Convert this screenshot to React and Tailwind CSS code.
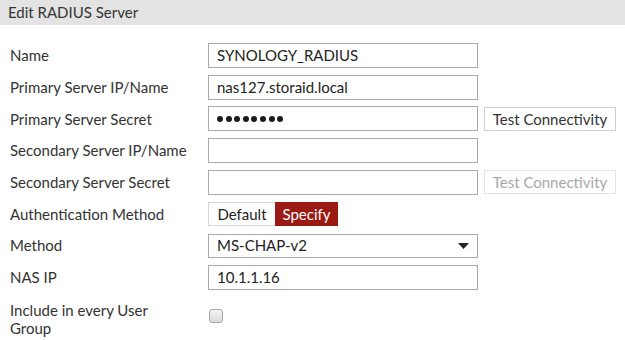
import React from "react";

const Row = ({ label, children }) => (
  <div className="flex items-center h-[25px]">
    <div className="w-[208px] shrink-0 pl-[10px] text-[15px] text-[#333]">{label}</div>
    {children}
  </div>
);

const TextBox = ({ value }) => (
  <div className="w-[270px] h-[25px] border border-[#a9a9a9] bg-white flex items-center pl-[8px] text-[15px] text-[#222]">
    {value}
  </div>
);

const TestButton = ({ disabled }) => (
  <div
    className={`ml-[6px] w-[132px] h-[24px] border flex items-center justify-center text-[15px] ${
      disabled ? "border-[#e2e2e2] text-[#a8a8a8]" : "border-[#cfcfcf] text-[#333]"
    }`}
  >
    Test Connectivity
  </div>
);

export default function App() {
  return (
    <div className="w-[625px] h-[340px] bg-white font-['Lato','Liberation_Sans',sans-serif] overflow-hidden">
      <div className="h-[25px] bg-[#e3e3e3] flex items-center pl-[8px] text-[15px] text-[#333]">
        Edit RADIUS Server
      </div>

      <div className="mt-[18px] flex flex-col gap-[6.7px]">
        <Row label="Name">
          <TextBox value="SYNOLOGY_RADIUS" />
        </Row>
        <Row label="Primary Server IP/Name">
          <TextBox value="nas127.storaid.local" />
        </Row>
        <Row label="Primary Server Secret">
          <div className="w-[270px] h-[25px] border border-[#a9a9a9] bg-white flex items-center pl-[8px] gap-[2.6px]">
            {[0, 1, 2, 3, 4, 5, 6, 7].map((i) => (
              <span key={i} className="w-[6px] h-[6px] rounded-full bg-[#1a1a1a]" />
            ))}
          </div>
          <TestButton />
        </Row>
        <Row label="Secondary Server IP/Name">
          <TextBox value="" />
        </Row>
        <Row label="Secondary Server Secret">
          <TextBox value="" />
          <TestButton disabled />
        </Row>
        <Row label="Authentication Method">
          <div className="flex h-[24px] text-[15px]">
            <div className="w-[67px] border border-r-0 border-[#d6d6d6] flex items-center justify-center text-[#222]">
              Default
            </div>
            <div className="w-[63px] bg-[#9b1a14] flex items-center justify-center text-white">
              Specify
            </div>
          </div>
        </Row>
        <Row label="Method">
          <div className="w-[270px] h-[24px] border border-[#a9a9a9] bg-white flex items-center justify-between pl-[8px] pr-[8px] text-[15px] text-[#222]">
            <span>MS-CHAP-v2</span>
            <svg width="11" height="6" viewBox="0 0 11 6">
              <path d="M0 0 L11 0 L5.5 6 Z" fill="#222" />
            </svg>
          </div>
        </Row>
        <Row label="NAS IP">
          <TextBox value="10.1.1.16" />
        </Row>
      </div>

      <div className="mt-[11px] flex items-start">
        <div className="w-[208px] shrink-0 pl-[10px] text-[15px] leading-[18px] text-[#333]">
          Include in every User
          <br />
          Group
        </div>
        <div className="mt-[8px] ml-[1px] w-[14px] h-[14px] rounded-[3px] border border-[#a8a8a8] bg-gradient-to-b from-[#f4f4f4] to-[#dcdcdc]" />
      </div>
    </div>
  );
}
